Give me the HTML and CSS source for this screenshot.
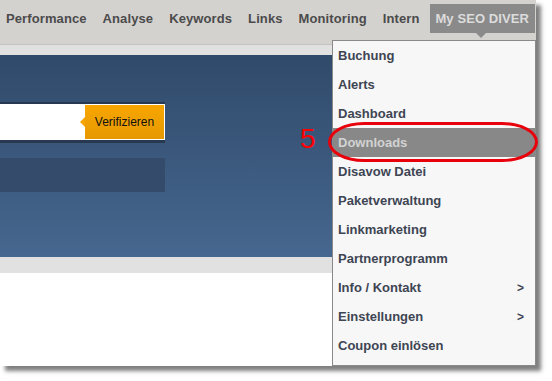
FILE: index.html
```html
<!DOCTYPE html>
<html lang="de">
<head>
<meta charset="utf-8">
<title>My SEO DIVER</title>
<link rel="stylesheet" href="styles.css">
</head>
<body>
<div class="frame">
  <nav class="nav">
    <span class="nav-item">Performance</span>
    <span class="nav-item">Analyse</span>
    <span class="nav-item">Keywords</span>
    <span class="nav-item">Links</span>
    <span class="nav-item">Monitoring</span>
    <span class="nav-item">Intern</span>
    <span class="nav-item nav-active">My SEO DIVER</span>
  </nav>
  <div class="band"></div>
  <section class="hero">
    <div class="verify">
      <div class="field">
        <span class="btn">Verifizieren</span>
      </div>
    </div>
    <div class="darkbox"></div>
  </section>
  <div class="band band-low"></div>
  <div class="content"></div>

  <ul class="menu">
    <li>Buchung</li>
    <li>Alerts</li>
    <li>Dashboard</li>
    <li class="active">Downloads</li>
    <li>Disavow Datei</li>
    <li>Paketverwaltung</li>
    <li>Linkmarketing</li>
    <li>Partnerprogramm</li>
    <li class="sub">Info / Kontakt<span>&gt;</span></li>
    <li class="sub">Einstellungen<span>&gt;</span></li>
    <li>Coupon einlösen</li>
  </ul>
  <div class="mark-num">5</div>
  <div class="mark-ring"></div>
</div>
</body>
</html>
```

FILE: styles.css
```css
* { box-sizing: border-box; }
html, body { margin: 0; padding: 0; background: #fff; }
body {
  font-family: "Liberation Sans", Arial, sans-serif;
  width: 552px;
  height: 381px;
  overflow: hidden;
}
.frame {
  position: relative;
  width: 536px;
  height: 366px;
  background: #fff;
  box-shadow: 5px 5px 4px rgba(0, 0, 0, 0.5);
  overflow: visible;
}
.nav {
  height: 45px;
  background: #d4d2cf;
  border-bottom: 1px solid #c3c2c0;
  display: flex;
  align-items: flex-start;
  padding: 4px 0 0 6px;
  gap: 16px;
}
.nav-item {
  font-size: 13px;
  font-weight: bold;
  color: #4b4b4b;
  line-height: 29px;
  letter-spacing: 0.1px;
}
.nav-active {
  position: relative;
  margin-left: -5px;
  padding: 0 6px 0 5px;
  background: #8a8a8a;
  color: #dcdcdc;
}
.nav-active::after {
  content: "";
  position: absolute;
  left: 46px;
  top: 29px;
  border-left: 5px solid transparent;
  border-right: 5px solid transparent;
  border-top: 5px solid #8a8a8a;
}
.band {
  height: 10px;
  background: #e1e1e1;
}
.band-low { height: 16px; }
.hero {
  height: 202px;
  background: linear-gradient(#304a6a, #46678f);
  padding-top: 47px;
}
.verify {
  width: 165px;
  background: #283850;
  padding: 2px 0 3px 0;
}
.field {
  height: 36px;
  background: #fff;
  display: flex;
  justify-content: flex-end;
  padding: 1px 1px 1px 0;
}
.btn {
  position: relative;
  width: 79px;
  height: 34px;
  background: linear-gradient(#f7a600, #e69800);
  color: #111;
  font-size: 12px;
  display: flex;
  align-items: center;
  justify-content: center;
}
.btn::before {
  content: "";
  position: absolute;
  left: -5px;
  top: 12px;
  border-top: 5px solid transparent;
  border-bottom: 5px solid transparent;
  border-right: 5px solid #f5a400;
}
.darkbox {
  width: 165px;
  height: 34px;
  margin-top: 15px;
  background: #344b6b;
}
.content { height: 93px; }

.menu {
  position: absolute;
  left: 332px;
  top: 40px;
  width: 204px;
  height: 326px;
  margin: 0;
  padding: 0;
  list-style: none;
  background: #f7f7f7;
  border: 1px solid #8a8a8a;
}
.menu li {
  height: 29px;
  display: flex;
  align-items: center;
  justify-content: space-between;
  padding: 0 11px 0 5px;
  font-size: 13px;
  font-weight: bold;
  color: #3e4553;
}
.menu li span { font-size: 12px; }
.menu li.active {
  background: #888;
  color: #d2d2d2;
}
.mark-num {
  position: absolute;
  left: 300px;
  top: 124px;
  font-size: 28px;
  line-height: 30px;
  color: #f00;
}
.mark-ring {
  position: absolute;
  left: 328px;
  top: 122px;
  width: 210px;
  height: 40px;
  border: 3px solid #e8000a;
  border-radius: 36px / 20px;
}
```
